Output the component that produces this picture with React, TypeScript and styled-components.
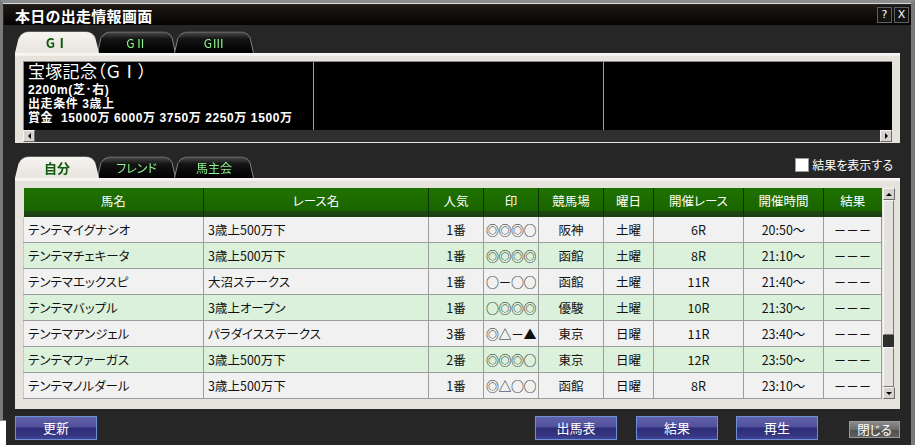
import React from 'react';
import styled, { createGlobalStyle } from 'styled-components';

const GlobalStyle = createGlobalStyle`
  html, body {
    margin: 0;
    padding: 0;
    background: #ffffff;
  }
  body {
    font-family: "Noto Sans CJK JP", "DejaVu Sans", sans-serif;
    font-feature-settings: "palt";
  }
`;

const Window = styled.div`
  position: relative;
  width: 915px;
  height: 445px;
  box-sizing: border-box;
  background: #262626;
  border-top: 3px solid #8c8c8c;
  border-left: 3px solid #7a7a7a;
  border-right: 4px solid #7a7a7a;
  box-shadow: inset 0 1px 0 #d6d6d6;
  display: flex;
  flex-direction: column;
  &::after {
    content: '';
    position: absolute;
    left: -3px;
    top: 417px;
    width: 6px;
    height: 28px;
    background: #ffffff;
    border-top: 1px solid #8c8c8c;
  }
`;

const TitleBar = styled.div`
  height: 20px;
  margin: 2px 0 0 1px;
  padding: 0 2px 0 11px;
  display: flex;
  align-items: center;
  background: linear-gradient(#1f1915, #0e0b09 60%, #040404);
`;

const Title = styled.div`
  flex: 1;
  color: #ffffff;
  font-size: 15px;
  font-weight: bold;
  letter-spacing: 0.3px;
`;

const TitleButton = styled.div`
  width: 13px;
  height: 14px;
  margin-left: 2px;
  border: 1px solid #5e5e5e;
  background: #141414;
  color: #ffffff;
  font-family: "DejaVu Sans", sans-serif;
  font-size: 11px;
  line-height: 14px;
  text-align: center;
`;

const Body = styled.div`
  flex: 1;
  padding: 6px 11px 0 12px;
  display: flex;
  flex-direction: column;
`;

const TabRow = styled.div<{ $top: number }>`
  display: flex;
  align-items: flex-end;
  height: 22px;
  margin-top: ${p => p.$top}px;
`;

const Tab = styled.div<{ $active?: boolean; $w: number }>`
  position: relative;
  width: ${p => p.$w}px;
  height: 22px;
  margin-right: -2px;
  display: flex;
  align-items: center;
  justify-content: center;
  padding-top: 1px;
  box-sizing: border-box;
  font-size: ${p => (p.$active ? 13 : 12)}px;
  font-weight: ${p => (p.$active ? 'bold' : 'normal')};
  color: ${p => (p.$active ? '#0f5a0f' : '#8ff58f')};
  z-index: ${p => (p.$active ? 2 : 1)};
  &::before {
    content: '';
    position: absolute;
    left: 0;
    right: 0;
    top: -3px;
    bottom: 0;
    z-index: -1;
    border-radius: 10px 9px 0 0;
    transform: perspective(40px) rotateX(13deg);
    transform-origin: bottom;
    box-sizing: border-box;
    border: 1px solid ${p => (p.$active ? '#f4f2ee' : '#858585')};
    border-bottom: none;
    background: ${p =>
      p.$active
        ? 'linear-gradient(#f6f4f0, #e8e4de)'
        : 'linear-gradient(#4a4a4a, #141414 35%, #000000)'};
  }
`;

const Spacer = styled.div`
  flex: 1;
`;

const CheckLabel = styled.label`
  display: flex;
  align-items: center;
  align-self: flex-start;
  margin: 0 7px 0 0;
  color: #ffffff;
  font-size: 12px;
`;

const CheckBox = styled.span`
  width: 12px;
  height: 12px;
  margin-right: 3px;
  background: #ffffff;
  border: 1px solid #9a9a9a;
`;

const Panel = styled.div<{ $pad: string }>`
  background: #e6e2dc;
  border-top: 1px solid #fbfaf8;
  padding: ${p => p.$pad};
  box-shadow: inset 0 2px 0 #f4f2ee;
`;

const InfoBox = styled.div`
  display: grid;
  grid-template-columns: 290px 290px 1fr;
  height: 68px;
  background: #000000;
  border-top: 1px solid #8a8a8a;
  border-left: 1px solid #8a8a8a;
`;

const InfoCol = styled.div`
  border-right: 1px solid #a0a0a0;
  padding: 1px 0 0 4px;
  color: #ffffff;
  font-family: "Liberation Sans", "Noto Sans CJK JP", sans-serif;
  &:last-child {
    border-right: none;
  }
`;

const RaceName = styled.div`
  font-size: 17px;
  line-height: 20px;
  letter-spacing: 0.3px;
`;

const InfoLine = styled.div`
  font-size: 12px;
  font-weight: bold;
  line-height: 14px;
  letter-spacing: 0.6px;
  white-space: pre;
`;

const HScroll = styled.div`
  display: flex;
  height: 12px;
  background: #303030;
`;

const ScrollButton = styled.div<{ $dir: string }>`
  width: 12px;
  height: 12px;
  box-sizing: border-box;
  background: #d6d3ce;
  border: 1px solid #f4f4f4;
  border-right-color: #6a6a6a;
  border-bottom-color: #6a6a6a;
  display: flex;
  align-items: center;
  justify-content: center;
  &::after {
    content: '';
    width: 0;
    height: 0;
    ${p =>
      p.$dir === 'left'
        ? 'border-top: 3px solid transparent; border-bottom: 3px solid transparent; border-right: 3px solid #000;'
        : p.$dir === 'right'
        ? 'border-top: 3px solid transparent; border-bottom: 3px solid transparent; border-left: 3px solid #000;'
        : p.$dir === 'up'
        ? 'border-left: 3px solid transparent; border-right: 3px solid transparent; border-bottom: 3px solid #000;'
        : 'border-left: 3px solid transparent; border-right: 3px solid transparent; border-top: 3px solid #000;'}
  }
`;

const HTrack = styled.div`
  flex: 1;
`;

const TableWrap = styled.div`
  display: flex;
  align-items: flex-start;
`;

const Table = styled.table`
  width: 858px;
  table-layout: fixed;
  border-collapse: collapse;
  font-size: 12.5px;
`;

const Th = styled.th<{ $w: number }>`
  width: ${p => p.$w}px;
  height: 29px;
  padding: 0 0 5px;
  box-sizing: border-box;
  color: #ffffff;
  font-weight: normal;
  font-size: 12.5px;
  background: linear-gradient(#1f7200, #1a6400 80%, #1c4712 80%, #1b3f12);
  border-left: 1px solid #0a3300;
  &:first-child {
    border-left: none;
  }
`;

const Tr = styled.tr<{ $odd: boolean }>`
  background: ${p => (p.$odd ? '#dbf1db' : '#f1f1f1')};
`;

const Td = styled.td<{ $align?: string }>`
  height: 25px;
  padding: ${p => (p.$align === 'left' ? '0 0 0 4px' : '0')};
  text-align: ${p => p.$align || 'center'};
  border: 1px solid #9c9c9c;
  border-top: none;
  color: #111111;
  white-space: nowrap;
  overflow: hidden;
  &:first-child {
    border-left-color: #c8c8c8;
  }
`;

const Mark = styled(Td)`
  font-size: 13px;
  letter-spacing: -0.5px;
`;

const VScroll = styled.div`
  width: 11px;
  height: 211px;
  margin-left: 1px;
  display: flex;
  flex-direction: column;
  background: #2e2e2e;
`;

const VThumb = styled.div<{ $h: number }>`
  height: ${p => p.$h}px;
  box-sizing: border-box;
  background: #e4e2de;
  border: 1px solid #f8f8f8;
  border-right-color: #7a7a7a;
  border-bottom-color: #7a7a7a;
`;

const VGap = styled.div<{ $h: number }>`
  height: ${p => p.$h}px;
`;

const ButtonRow = styled.div`
  display: flex;
  align-items: flex-start;
  margin-top: 7px;
`;

const BlueButton = styled.div<{ $ml?: number }>`
  width: 82px;
  height: 24px;
  margin-left: ${p => p.$ml || 0}px;
  box-sizing: border-box;
  border: 1px solid #6d8fd6;
  background: linear-gradient(#6262aa, #50509c 45%, #2c2c78 50%, #34347f 80%, #43439a);
  color: #ffffff;
  font-size: 13px;
  line-height: 22px;
  text-align: center;
`;

const GreyButton = styled.div`
  width: 51px;
  height: 17px;
  margin: 5px 0 0 31px;
  box-sizing: border-box;
  border: 1px solid #9a9a9a;
  background: linear-gradient(#8a8a8a, #6c6c6c 50%, #505050 55%, #5e5e5e);
  color: #ffffff;
  font-size: 12.5px;
  line-height: 15px;
  text-align: center;
`;

const columns = [
  { label: '馬名', w: 180 },
  { label: 'レース名', w: 225 },
  { label: '人気', w: 55 },
  { label: '印', w: 55 },
  { label: '競馬場', w: 65 },
  { label: '曜日', w: 50 },
  { label: '開催レース', w: 90 },
  { label: '開催時間', w: 80 },
  { label: '結果', w: 58 },
];

const rows = [
  ['テンテマイグナシオ', '3歳上500万下', '1番', '◎◎◎○', '阪神', '土曜', '6R', '20:50～'],
  ['テンテマチェキータ', '3歳上500万下', '1番', '◎◎◎◎', '函館', '土曜', '8R', '21:10～'],
  ['テンテマエックスピ', '大沼ステークス', '1番', '○－○○', '函館', '土曜', '11R', '21:40～'],
  ['テンテマバップル', '3歳上オープン', '1番', '○◎◎◎', '優駿', '土曜', '10R', '21:30～'],
  ['テンテマアンジェル', 'パラダイスステークス', '3番', '◎△－▲', '東京', '日曜', '11R', '23:40～'],
  ['テンテマファーガス', '3歳上500万下', '2番', '◎◎◎○', '東京', '日曜', '12R', '23:50～'],
  ['テンテマノルダール', '3歳上500万下', '1番', '◎△○○', '函館', '日曜', '8R', '23:10～'],
];

export default function App() {
  return (
    <>
      <GlobalStyle />
      <Window>
        <TitleBar>
          <Title>本日の出走情報画面</Title>
          <TitleButton>?</TitleButton>
          <TitleButton>X</TitleButton>
        </TitleBar>
        <Body>
          <TabRow $top={0}>
            <Tab $active $w={84}>GⅠ</Tab>
            <Tab $w={79}>GⅡ</Tab>
            <Tab $w={80}>GⅢ</Tab>
          </TabRow>
          <Panel $pad="7px 8px 1px 8px">
            <InfoBox>
              <InfoCol>
                <RaceName>宝塚記念（ＧⅠ）</RaceName>
                <InfoLine>2200m(芝･右)</InfoLine>
                <InfoLine>出走条件 3歳上</InfoLine>
                <InfoLine>賞金  15000万 6000万 3750万 2250万 1500万</InfoLine>
              </InfoCol>
              <InfoCol />
              <InfoCol />
            </InfoBox>
            <HScroll>
              <ScrollButton $dir="left" />
              <HTrack />
              <ScrollButton $dir="right" />
            </HScroll>
          </Panel>

          <TabRow $top={13}>
            <Tab $active $w={84}>自分</Tab>
            <Tab $w={79}>フレンド</Tab>
            <Tab $w={80}>馬主会</Tab>
            <Spacer />
            <CheckLabel>
              <CheckBox />
              結果を表示する
            </CheckLabel>
          </TabRow>
          <Panel $pad="9px 8px 10px 8px">
            <TableWrap>
              <Table>
                <thead>
                  <tr>
                    {columns.map(c => (
                      <Th key={c.label} $w={c.w}>{c.label}</Th>
                    ))}
                  </tr>
                </thead>
                <tbody>
                  {rows.map((r, i) => (
                    <Tr key={r[0]} $odd={i % 2 === 1}>
                      <Td $align="left">{r[0]}</Td>
                      <Td $align="left">{r[1]}</Td>
                      <Td>{r[2]}</Td>
                      <Mark>{r[3]}</Mark>
                      <Td>{r[4]}</Td>
                      <Td>{r[5]}</Td>
                      <Td>{r[6]}</Td>
                      <Td>{r[7]}</Td>
                      <Td>－－－</Td>
                    </Tr>
                  ))}
                </tbody>
              </Table>
              <VScroll>
                <ScrollButton $dir="up" />
                <VThumb $h={135} />
                <VGap $h={12} />
                <VThumb $h={40} />
                <ScrollButton $dir="down" />
              </VScroll>
            </TableWrap>
          </Panel>

          <ButtonRow>
            <BlueButton>更新</BlueButton>
            <Spacer />
            <BlueButton>出馬表</BlueButton>
            <BlueButton $ml={19}>結果</BlueButton>
            <BlueButton $ml={18}>再生</BlueButton>
            <GreyButton>閉じる</GreyButton>
          </ButtonRow>
        </Body>
      </Window>
    </>
  );
}
